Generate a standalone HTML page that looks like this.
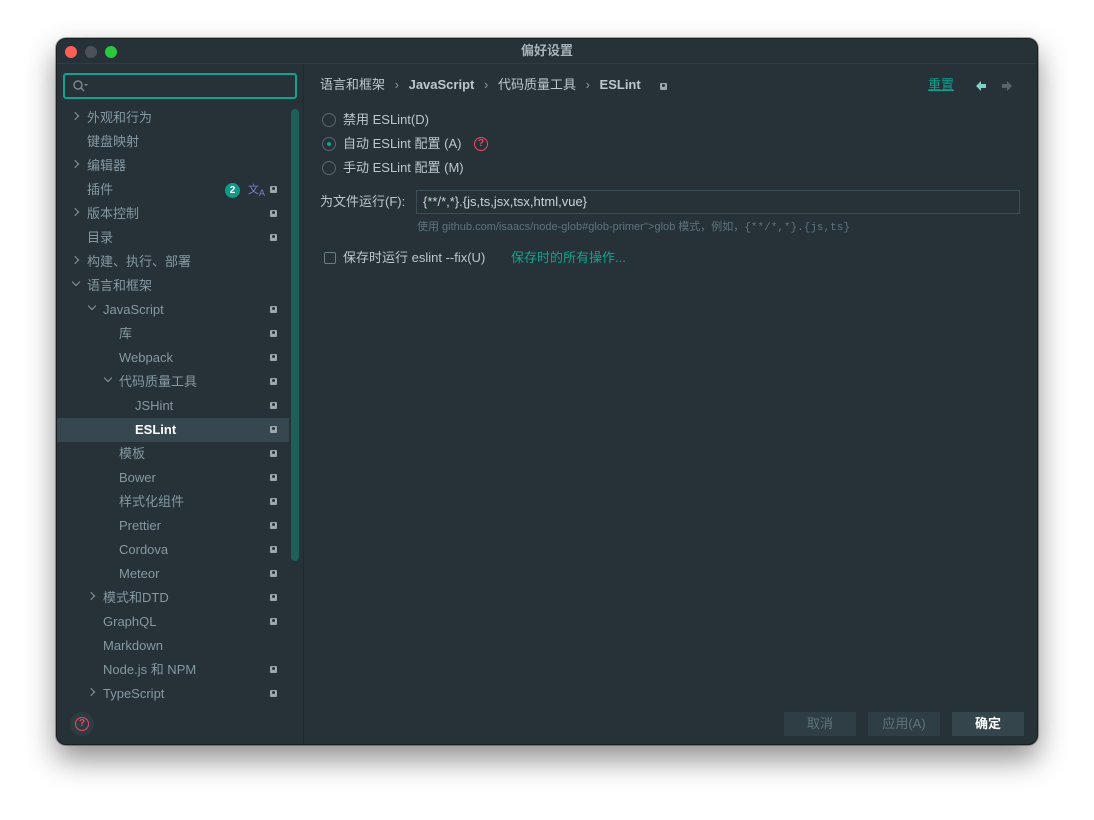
<!DOCTYPE html>
<html><head><meta charset="utf-8"><style>
*{margin:0;padding:0;box-sizing:border-box}
body{width:1094px;height:820px;background:#fff;position:relative;overflow:hidden;font-family:"Liberation Sans","Noto Sans CJK SC",sans-serif;font-size:13px}
.win{position:absolute;left:56px;top:38px;width:982px;height:707px;background:#263238;border-radius:10px;border:1px solid #1a1f22;box-shadow:0 14px 30px rgba(0,0,0,.45),0 0 0 1px rgba(0,0,0,.3);overflow:hidden}
.a{position:absolute;white-space:nowrap}
.tb{position:absolute;left:0;top:0;width:100%;height:25px;border-bottom:1px solid #2f3c42}
.dot{position:absolute;top:7px;width:12px;height:12px;border-radius:50%}
.side{color:#8698a1}
.row{position:absolute;left:0;width:232px;height:24px;line-height:24px}
.row span.t{position:absolute}
.ar{position:absolute;top:7px;width:6px;height:6px;border-right:1.4px solid #8698a1;border-bottom:1.4px solid #8698a1}
.ar.r{transform:rotate(-45deg)}
.ar.d{transform:rotate(45deg);top:5px}
.ic{position:absolute;left:213px;top:8px;width:7px;height:7px;background:#9aa8ae;border-radius:1px}
.ic::after{content:"";position:absolute;left:2px;top:1px;width:3px;height:3px;background:#263238;border-radius:50%}
.main{color:#bcc7cc}
.radio{position:absolute;width:14px;height:14px;border-radius:50%;border:1px solid #56666d}
.btn{position:absolute;top:673px;height:24px;line-height:24px;text-align:center;width:72px;background:#2e3e44;color:#5f747c}
</style></head><body>
<div class="win">
 <div class="tb">
  <div class="dot" style="left:8px;background:#fe5f57"></div>
  <div class="dot" style="left:28px;background:#4a5258"></div>
  <div class="dot" style="left:48px;background:#2ac840"></div>
  <div class="a" style="left:0;width:100%;text-align:center;top:4px;color:#a9b3b7;font-weight:bold;font-size:13px;line-height:15px">偏好设置</div>
 </div>
 <div class="a" style="left:6px;top:34px;width:234px;height:26px;border:2px solid #16a08f;border-radius:3px"></div>
 <svg class="a" style="left:15px;top:40px" width="16" height="14"><circle cx="6" cy="6" r="4" fill="none" stroke="#7d8d94" stroke-width="1.4"/><line x1="9" y1="9" x2="12" y2="12" stroke="#7d8d94" stroke-width="1.4"/><path d="M12 5h4l-2 2z" fill="#7d8d94"/></svg>
 <div class="a" style="left:246px;top:26px;width:1px;height:680px;background:#202a2e"></div>
 <div class="a" style="left:234px;top:70px;width:8px;height:452px;background:#1e5f58;border-radius:4px"></div>
 <div class="a" style="left:0;top:379px;width:232px;height:24px;background:#37474f"></div>
 <div class="side" style="position:absolute;left:0;top:67px;width:240px;height:596px;overflow:hidden">
  <div class="row" style="top:0"><i class="ar r" style="left:15px"></i><span class="t" style="left:30px">外观和行为</span></div>
  <div class="row" style="top:24px"><span class="t" style="left:30px">键盘映射</span></div>
  <div class="row" style="top:48px"><i class="ar r" style="left:15px"></i><span class="t" style="left:30px">编辑器</span></div>
  <div class="row" style="top:72px"><span class="t" style="left:30px">插件</span><span style="position:absolute;left:168px;top:5px;width:15px;height:15px;border-radius:50%;background:#11998a;color:#fff;font-size:10px;font-weight:bold;line-height:15px;text-align:center">2</span><span style="position:absolute;left:191px;top:0;color:#7b7fd0;font-size:11px">文<sub style="font-size:9px">A</sub></span><i class="ic"></i></div>
  <div class="row" style="top:96px"><i class="ar r" style="left:15px"></i><span class="t" style="left:30px">版本控制</span><i class="ic"></i></div>
  <div class="row" style="top:120px"><span class="t" style="left:30px">目录</span><i class="ic"></i></div>
  <div class="row" style="top:144px"><i class="ar r" style="left:15px"></i><span class="t" style="left:30px">构建、执行、部署</span></div>
  <div class="row" style="top:168px"><i class="ar d" style="left:16px"></i><span class="t" style="left:30px">语言和框架</span></div>
  <div class="row" style="top:192px"><i class="ar d" style="left:32px"></i><span class="t" style="left:46px">JavaScript</span><i class="ic"></i></div>
  <div class="row" style="top:216px"><span class="t" style="left:62px">库</span><i class="ic"></i></div>
  <div class="row" style="top:240px"><span class="t" style="left:62px">Webpack</span><i class="ic"></i></div>
  <div class="row" style="top:264px"><i class="ar d" style="left:48px"></i><span class="t" style="left:62px">代码质量工具</span><i class="ic"></i></div>
  <div class="row" style="top:288px"><span class="t" style="left:78px">JSHint</span><i class="ic"></i></div>
  <div class="row" style="top:312px"><span class="t" style="left:78px;color:#fff;font-weight:bold">ESLint</span><i class="ic"></i></div>
  <div class="row" style="top:336px"><span class="t" style="left:62px">模板</span><i class="ic"></i></div>
  <div class="row" style="top:360px"><span class="t" style="left:62px">Bower</span><i class="ic"></i></div>
  <div class="row" style="top:384px"><span class="t" style="left:62px">样式化组件</span><i class="ic"></i></div>
  <div class="row" style="top:408px"><span class="t" style="left:62px">Prettier</span><i class="ic"></i></div>
  <div class="row" style="top:432px"><span class="t" style="left:62px">Cordova</span><i class="ic"></i></div>
  <div class="row" style="top:456px"><span class="t" style="left:62px">Meteor</span><i class="ic"></i></div>
  <div class="row" style="top:480px"><i class="ar r" style="left:31px"></i><span class="t" style="left:46px">模式和DTD</span><i class="ic"></i></div>
  <div class="row" style="top:504px"><span class="t" style="left:46px">GraphQL</span><i class="ic"></i></div>
  <div class="row" style="top:528px"><span class="t" style="left:46px">Markdown</span></div>
  <div class="row" style="top:552px"><span class="t" style="left:46px">Node.js 和 NPM</span><i class="ic"></i></div>
  <div class="row" style="top:576px"><i class="ar r" style="left:31px"></i><span class="t" style="left:46px">TypeScript</span><i class="ic"></i></div>
 </div>
 <div class="a" style="left:13px;top:673px;width:24px;height:24px;border-radius:50%;background:#2e3c42"></div>
 <div class="a" style="left:18px;top:678px;width:14px;height:14px;border-radius:50%;border:1.5px solid #f0476a;color:#f0476a;font-size:10px;font-weight:bold;text-align:center;line-height:11px">?</div>

 <div class="main">
  <div class="a" style="left:263px;top:38px;line-height:16px">语言和框架 <span style="color:#8a9aa1;margin:0 6px">›</span> <b>JavaScript</b> <span style="color:#8a9aa1;margin:0 6px">›</span> 代码质量工具 <span style="color:#8a9aa1;margin:0 6px">›</span> <b>ESLint</b></div>
  <i class="ic" style="left:603px;top:44px"></i>
  <div class="a" style="left:871px;top:38px;line-height:16px;color:#13a090;text-decoration:underline">重置</div>
  <svg class="a" style="left:918px;top:41px" width="40" height="12"><path d="M1 6L6 1V4H11V8H6V11Z" fill="#7fd1c5"/><path d="M37 6L32 1V4H27V8H32V11Z" fill="#5a6469"/></svg>
  <div class="radio" style="left:265px;top:74px"></div><div class="a" style="left:286px;top:73px;line-height:16px">禁用 ESLint(D)</div>
  <div class="radio" style="left:265px;top:98px"><div style="position:absolute;left:4px;top:4px;width:4px;height:4px;border-radius:50%;background:#14a090"></div></div><div class="a" style="left:286px;top:97px;line-height:16px">自动 ESLint 配置 (A)</div>
  <div class="a" style="left:417px;top:98px;width:14px;height:14px;border-radius:50%;border:1.5px solid #f0476a;color:#f0476a;font-size:10px;font-weight:bold;text-align:center;line-height:11px">?</div>
  <div class="radio" style="left:265px;top:122px"></div><div class="a" style="left:286px;top:121px;line-height:16px">手动 ESLint 配置 (M)</div>
  <div class="a" style="left:263px;top:155px;line-height:16px">为文件运行(F):</div>
  <div class="a" style="left:359px;top:151px;width:604px;height:24px;border:1px solid #3c4d55;background:#263238;padding-left:6px;line-height:22px;color:#c9d3d7">{**/*,*}.{js,ts,jsx,tsx,html,vue}</div>
  <div class="a" style="left:360px;top:181px;font-size:11px;line-height:14px;color:#5f737c">使用 github.com/isaacs/node-glob#glob-primer''&gt;glob 模式，例如，<span style="font-family:'Liberation Mono',monospace">{**/*,*}.{js,ts}</span></div>
  <div class="a" style="left:267px;top:213px;width:12px;height:12px;border:1px solid #6b7b82;border-radius:2px"></div>
  <div class="a" style="left:286px;top:211px;line-height:16px">保存时运行 eslint --fix(U)</div>
  <div class="a" style="left:454px;top:211px;line-height:16px;color:#13a090">保存时的所有操作...</div>
 </div>
 <div class="btn" style="left:727px">取消</div>
 <div class="btn" style="left:811px">应用(A)</div>
 <div class="btn" style="left:895px;background:#34464c;color:#fff;font-weight:bold">确定</div>
</div>
</body></html>
